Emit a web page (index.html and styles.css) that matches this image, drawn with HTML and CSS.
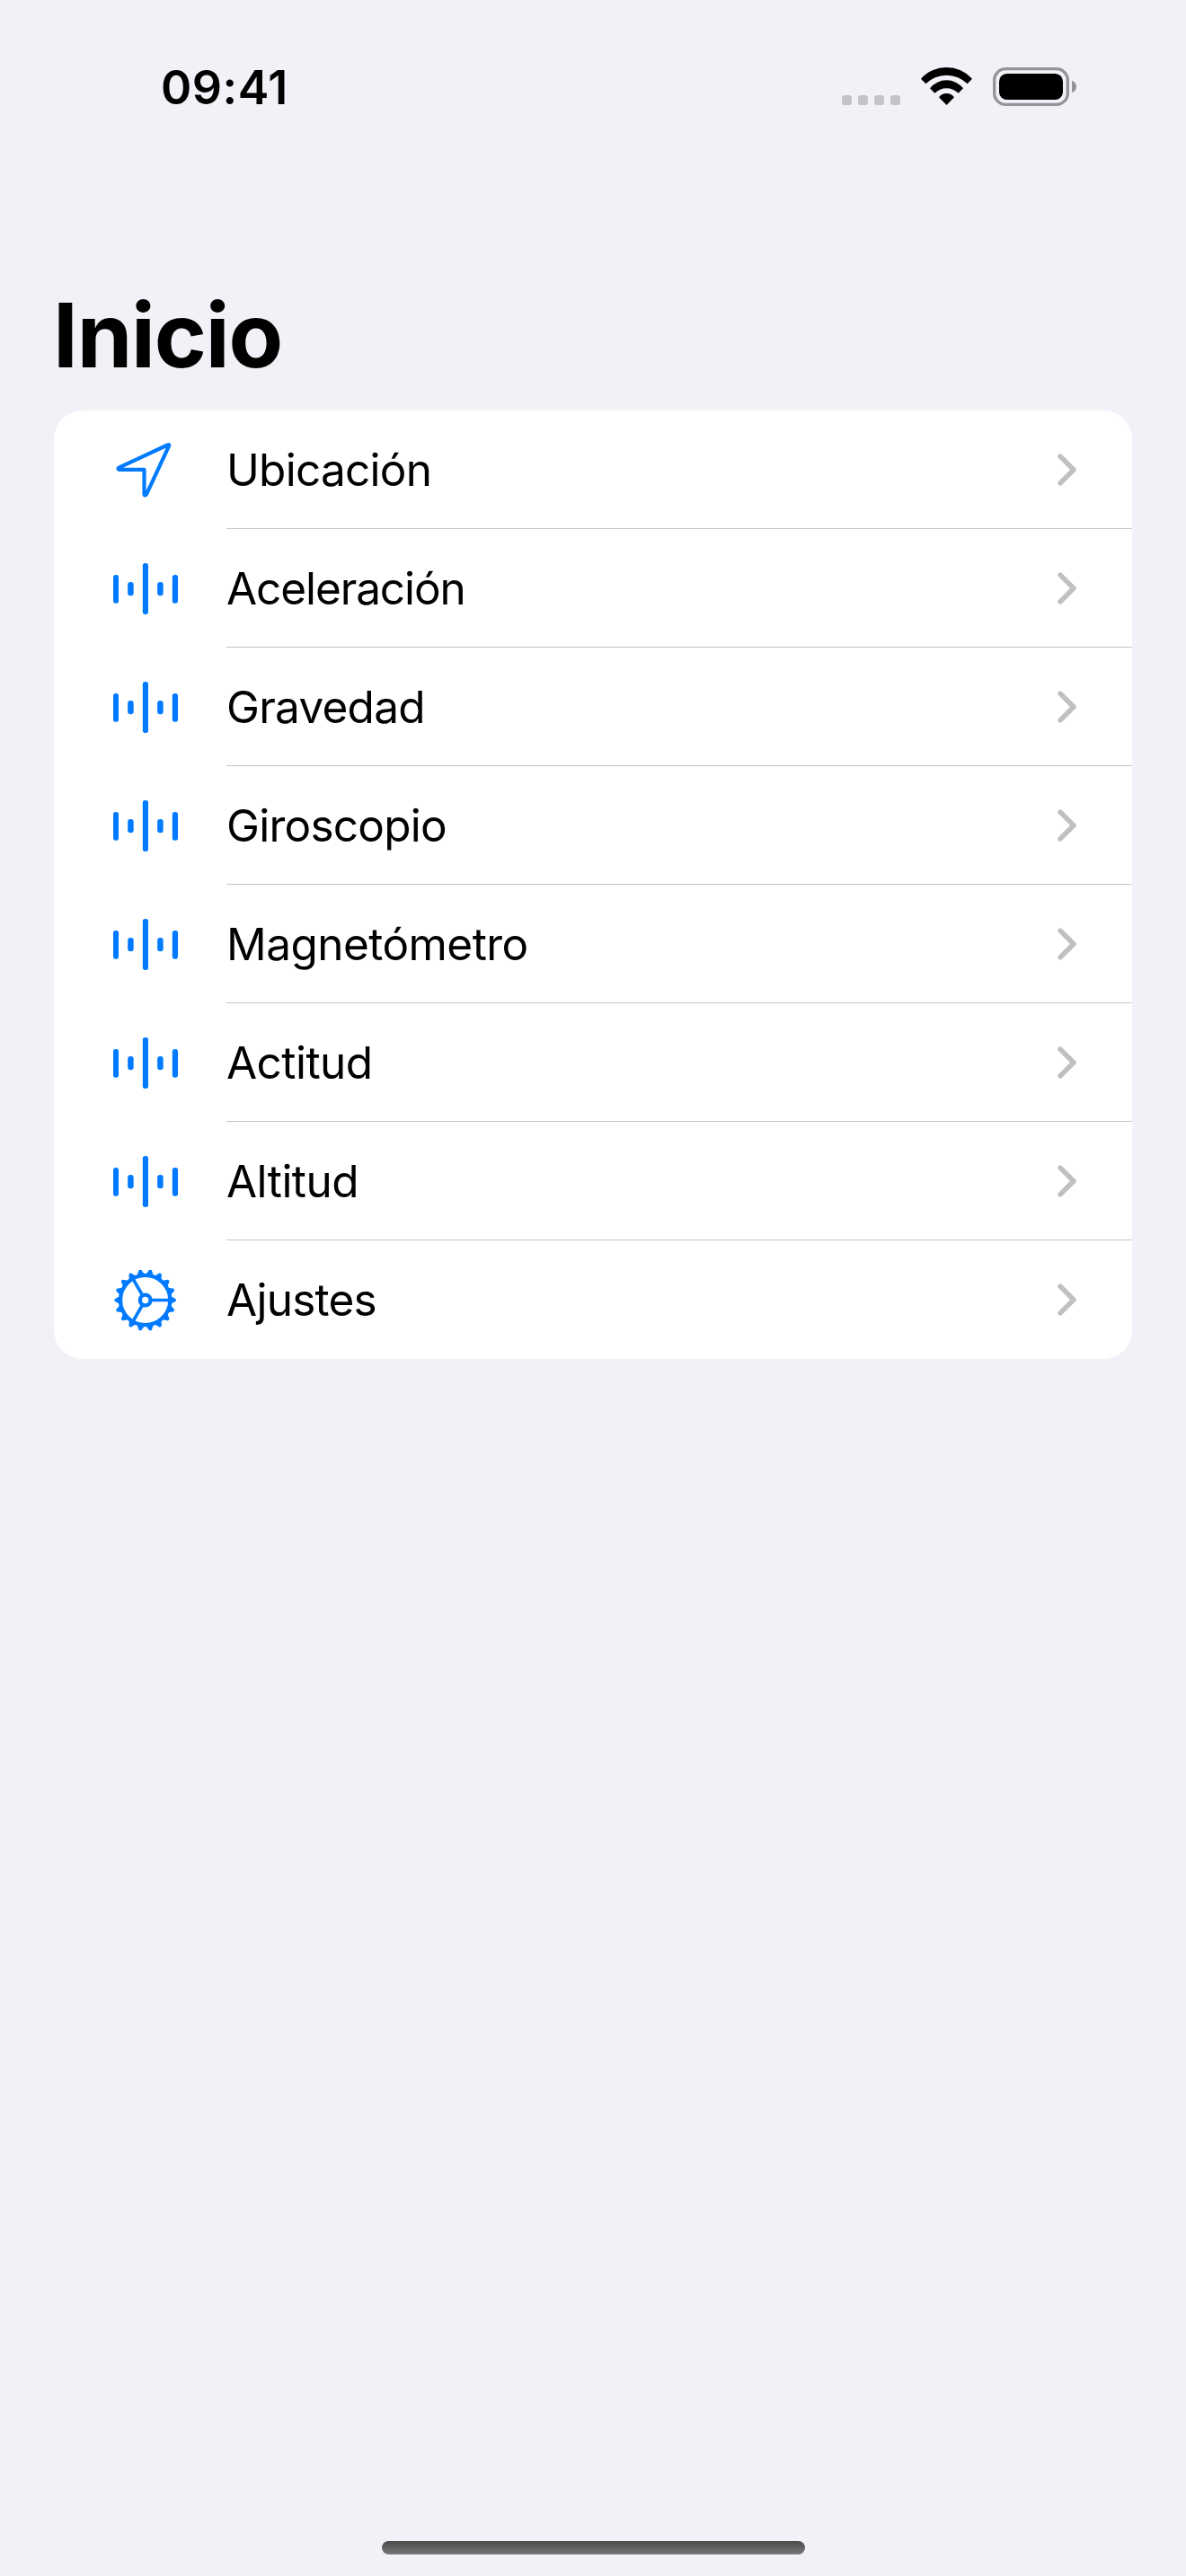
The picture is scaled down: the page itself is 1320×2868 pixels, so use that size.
FILE: index.html
```html
<!DOCTYPE html>
<html lang="es">
<head>
<meta charset="utf-8">
<title>Inicio</title>
<link rel="stylesheet" href="styles.css">
</head>
<body>
<svg class="defs" aria-hidden="true">
  <symbol id="wave" viewBox="0 -15 360 300">
    <g fill="currentColor">
      <rect x="48" y="90" width="18" height="95" rx="8"/>
      <rect x="96.500" y="114" width="19.500" height="46" rx="9"/>
      <rect x="146.500" y="51" width="18.500" height="171" rx="8"/>
      <rect x="195.500" y="114" width="19.500" height="46" rx="9"/>
      <rect x="245.500" y="90" width="18.500" height="95" rx="8"/>
    </g>
  </symbol>
  <symbol id="chevron" viewBox="0 0 63 109">
    <path d="M9 9.500 L54 54.500 L9 99.500" fill="none" stroke="currentColor" stroke-width="17" stroke-linecap="round" stroke-linejoin="round"/>
  </symbol>
  <symbol id="arrow" viewBox="0 9 360 300">
    <path d="M67 152 L229 76.500 Q237 73 233.500 81 L159 241 Q153 248 151.500 241 V158.500 H68 Q61 156 67 152Z" fill="none" stroke="currentColor" stroke-width="12.500" stroke-linejoin="round"/>
  </symbol>
  <symbol id="gear" viewBox="0 3 360 300">
    <g transform="translate(155 154.500)" fill="none" stroke="currentColor">
      <circle r="83" stroke-width="13"/>
      <circle r="17.500" stroke-width="13"/>
      <path d="M22 0H80M-11 19L-40 69.300M-11 -19L-40 -69.300" stroke-width="11"/>
      <g id="teeth3">
        <path id="tooth" d="M86 -10 L100 -3 Q102 0 100 3 L86 10Z" fill="currentColor" stroke-width="4" stroke-linejoin="round"/>
        <use href="#tooth" transform="rotate(20)"/>
        <use href="#tooth" transform="rotate(40)"/>
      </g>
      <use href="#teeth3" transform="rotate(60)"/>
      <use href="#teeth3" transform="rotate(120)"/>
      <use href="#teeth3" transform="rotate(180)"/>
      <use href="#teeth3" transform="rotate(240)"/>
      <use href="#teeth3" transform="rotate(300)"/>
    </g>
  </symbol>
</svg>

<header class="status">
  <time class="status__time">09:41</time>
  <div class="status__icons">
    <svg width="65" height="44" viewBox="51 72 195 132" fill="#c4c3c8">
      <rect x="51" y="168" width="33" height="33" rx="10"/>
      <rect x="105" y="168" width="33" height="33" rx="10"/>
      <rect x="159" y="168" width="33" height="33" rx="10"/>
      <rect x="213" y="168" width="33" height="33" rx="10"/>
    </svg>
    <svg width="57" height="44" viewBox="315 72 171 132">
      <path d="M315 113 A115 115 0 0 1 486 113 L470 130 A98 98 0 0 0 331 130Z"/>
      <path d="M345 145 A70.500 70.500 0 0 1 456 145 L440 161 A57 57 0 0 0 361 161Z"/>
      <path d="M375 175 A31 31 0 0 1 426 175 L400.500 201Z"/>
    </svg>
    <svg width="93" height="44" viewBox="555 72 279 132">
      <rect x="560" y="80" width="245" height="119" rx="38" fill="none" stroke="#949497" stroke-width="10"/>
      <rect x="576" y="96" width="213" height="87" rx="26"/>
      <path d="M819 119 C829 123 834 131 834 139.500 C834 148 829 156 819 160Z" fill="#949497"/>
    </svg>
  </div>
</header>

<main>
  <h1 class="title">Inicio</h1>
  <ul class="list">
    <li class="row"><svg class="row__icon"><use href="#arrow"/></svg><div class="row__body"><span class="label">Ubicación</span><svg class="row__chevron"><use href="#chevron"/></svg></div></li>
    <li class="row"><svg class="row__icon"><use href="#wave"/></svg><div class="row__body"><span class="label label--tight">Aceleración</span><svg class="row__chevron"><use href="#chevron"/></svg></div></li>
    <li class="row"><svg class="row__icon"><use href="#wave"/></svg><div class="row__body"><span class="label">Gravedad</span><svg class="row__chevron"><use href="#chevron"/></svg></div></li>
    <li class="row"><svg class="row__icon"><use href="#wave"/></svg><div class="row__body"><span class="label">Giroscopio</span><svg class="row__chevron"><use href="#chevron"/></svg></div></li>
    <li class="row"><svg class="row__icon"><use href="#wave"/></svg><div class="row__body"><span class="label label--loose">Magnetómetro</span><svg class="row__chevron"><use href="#chevron"/></svg></div></li>
    <li class="row"><svg class="row__icon"><use href="#wave"/></svg><div class="row__body"><span class="label label--loose">Actitud</span><svg class="row__chevron"><use href="#chevron"/></svg></div></li>
    <li class="row"><svg class="row__icon"><use href="#wave"/></svg><div class="row__body"><span class="label label--loose">Altitud</span><svg class="row__chevron"><use href="#chevron"/></svg></div></li>
    <li class="row"><svg class="row__icon"><use href="#gear"/></svg><div class="row__body"><span class="label">Ajustes</span><svg class="row__chevron"><use href="#chevron"/></svg></div></li>
  </ul>
</main>

<div class="home-indicator"></div>
</body>
</html>
```
FILE: styles.css
```css
* {
  box-sizing: border-box;
}

body {
  margin: 0;
  height: 2868px;
  display: flex;
  flex-direction: column;
  background: #f2f1f7;
  color: #000;
  font-family: Inter, "Liberation Sans", sans-serif;
}

svg {
  display: block;
  flex: none;
}

.defs {
  display: none;
}

.status {
  height: 192px;
  padding: 0 122px 0 179px;
  display: flex;
  align-items: center;
  justify-content: space-between;
}

.status__time {
  padding-top: 4px;
  font-size: 52px;
  font-weight: 600;
  line-height: 64px;
  letter-spacing: 0.5px;
}

.status__icons {
  display: flex;
  gap: 23px;
}

.title {
  margin: 121px 0 24px 59px;
  font-size: 99px;
  font-weight: 700;
  line-height: 120px;
  letter-spacing: -1.16px;
}

.list {
  margin: 0 60px;
  padding: 0;
  list-style: none;
  background: #fff;
  border-radius: 32px;
}

.row {
  display: flex;
  align-items: center;
  height: 132px;
  padding-left: 50px;
}

.row__icon {
  width: 120px;
  height: 100px;
  color: #007aff;
}

.row__body {
  flex: 1;
  display: flex;
  align-items: center;
  justify-content: space-between;
  height: 132px;
  margin-left: 22px;
  padding-right: 62px;
  box-shadow: inset 0 -1px #c6c6c8;
}

.row:last-child .row__body {
  box-shadow: none;
}

.row__chevron {
  width: 21px;
  height: 36px;
  color: #c0c0c1;
}

.label {
  font-size: 49.5px;
  line-height: 60px;
  letter-spacing: -0.75px;
}

.label--tight {
  letter-spacing: -1.1px;
}

.label--loose {
  letter-spacing: -0.55px;
}

.home-indicator {
  width: 471px;
  height: 15px;
  margin: auto 0 24px 425px;
  border-radius: 8px;
  background: linear-gradient(#4a4b4b, #78777a);
}
```
